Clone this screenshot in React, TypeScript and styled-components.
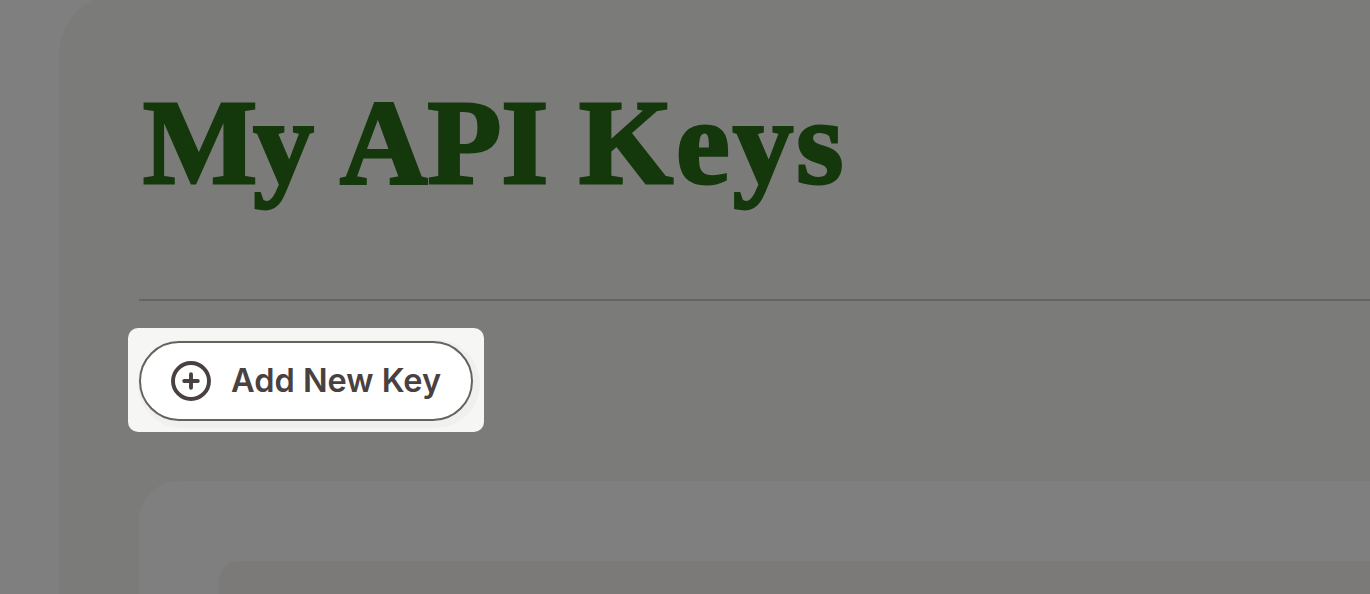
import React from "react";
import styled, { createGlobalStyle } from "styled-components";

export default function App() {
  return (
    <>
      <GlobalStyle />
      <Page>
        <Panel>
          <Title>
            <TitleWord $spacing={-4} $width={197}>My </TitleWord>
            <TitleWord $spacing={0} $width={239}>API </TitleWord>
            <TitleWord $spacing={3} $width={270}>Keys</TitleWord>
          </Title>
          <Divider />
          <ButtonRow>
            <AddKeyButton type="button">
              <PlusIcon viewBox="0 0 40 40">
                <circle cx="20" cy="20" r="18" />
                <path d="M20 13.2v13.6M13.2 20h13.6" />
              </PlusIcon>
              <ButtonLabel>Add New Key</ButtonLabel>
            </AddKeyButton>
            <Spotlight />
          </ButtonRow>
          <Card>
            <KeyList />
          </Card>
        </Panel>
      </Page>
    </>
  );
}

const GlobalStyle = createGlobalStyle`
  * {
    box-sizing: border-box;
  }

  body {
    margin: 0;
    overflow: hidden;
    background-color: #ffffff;
  }
`;

const Page = styled.main`
  height: 594px;
  padding-left: 59px;
  overflow: hidden;

  background-color: #ffffff;
`;

const Panel = styled.section`
  height: 700px;
  margin-top: -8px;
  padding: 88px 0 0 80px;

  border-radius: 64px 0 0 0;

  background-color: #f6f6f4;
`;

const Title = styled.h1`
  height: 140px;
  margin: 0;
  padding-left: 4px;

  color: #297116;
  font-family: "Liberation Serif", serif;
  font-size: 121px;
  font-weight: 700;
  line-height: 125px;
  white-space: nowrap;

  -webkit-text-stroke: 3px #297116;
  stroke-linejoin: round;

  display: flex;
`;

const TitleWord = styled.span<{ $spacing: number; $width: number }>`
  width: ${({ $width }) => $width}px;

  letter-spacing: ${({ $spacing }) => $spacing}px;
`;

const Divider = styled.hr`
  height: 2px;
  margin: 79px 0 0;

  border: 0;

  background-color: #cccbc8;
`;

const ButtonRow = styled.div`
  width: fit-content;
  margin-top: 40px;

  position: relative;
`;

const AddKeyButton = styled.button`
  width: 334px;
  height: 80px;
  padding: 0 0 0 30px;

  border: 2px solid #67625e;
  border-radius: 40px;
  box-shadow: 3px 3px 0 4px #f0f0ee;

  color: #49413f;
  background-color: #ffffff;

  font-family: "Inter", sans-serif;
  font-size: 32.5px;
  font-weight: 600;
  white-space: nowrap;

  display: flex;
  align-items: center;
  gap: 20px;

  cursor: pointer;
`;

const ButtonLabel = styled.span`
  padding-bottom: 2px;
`;

const PlusIcon = styled.svg`
  width: 40px;
  height: 40px;

  fill: none;
  stroke: #49413f;
  stroke-width: 3.9;
  stroke-linecap: round;
`;

// dims everything around the button
const Spotlight = styled.div`
  position: absolute;
  inset: -13px -11px -11px -11px;
  z-index: 1;

  border-radius: 10px;
  box-shadow: 0 0 0 2000px rgba(0, 0, 0, 0.5);

  pointer-events: none;
`;

const Card = styled.article`
  height: 300px;
  margin-top: 60px;
  padding: 80px 0 0 80px;

  border-radius: 40px 0 0 0;

  background-color: #ffffff;
`;

const KeyList = styled.div`
  height: 200px;

  border-radius: 20px 0 0 0;

  background-color: #f6f4f1;
`;
